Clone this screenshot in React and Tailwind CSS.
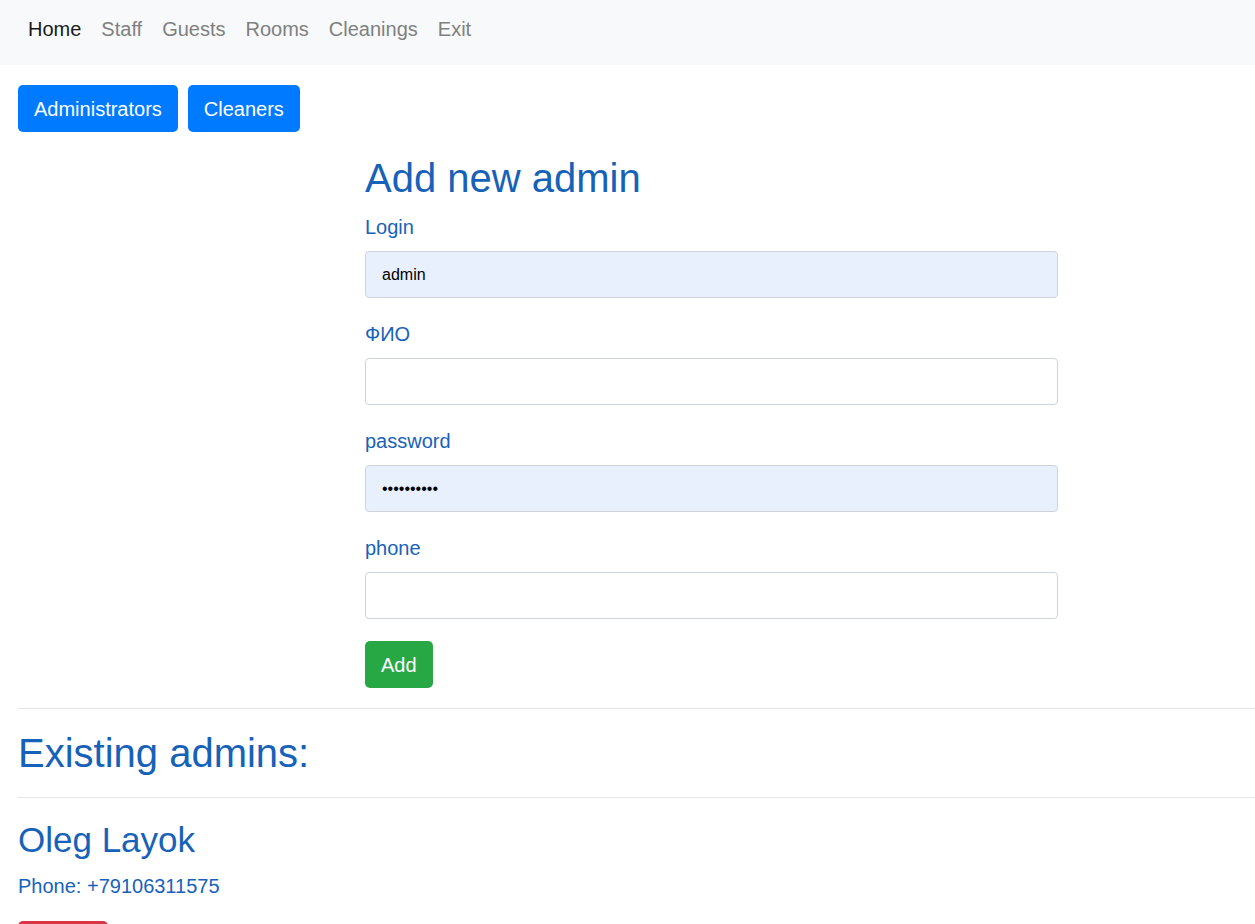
import React from 'react';

const navLinks = ['Home', 'Staff', 'Guests', 'Rooms', 'Cleanings', 'Exit'];

const fields = [
  { label: 'Login', type: 'text', value: 'admin', filled: true },
  { label: 'ФИО', type: 'text', value: '', filled: false },
  { label: 'password', type: 'password', value: 'qwerty1234', filled: true },
  { label: 'phone', type: 'text', value: '', filled: false },
];

const admins = [{ name: 'Oleg Layok', phone: '+79106311575' }];

export default function App() {
  return (
    <div className="min-h-screen bg-white font-['Liberation_Sans',Arial,sans-serif]">
      <nav className="h-[65px] bg-[#f8f9fa] flex items-start pt-[14px] pl-[18px]">
        {navLinks.map((link, i) => (
          <a
            key={link}
            href="#"
            className={`px-[10px] text-[20px] leading-[30px] ${
              i === 0 ? 'text-[#1a1a1a]' : 'text-[#808080]'
            }`}
          >
            {link}
          </a>
        ))}
      </nav>

      <div className="pl-[18px]">
        <div className="flex gap-[10px] mt-[20px]">
          <button className="h-[47px] px-[16px] rounded-[5px] bg-[#007bff] text-white text-[20px]">
            Administrators
          </button>
          <button className="h-[47px] px-[16px] rounded-[5px] bg-[#007bff] text-white text-[20px]">
            Cleaners
          </button>
        </div>

        <form className="ml-[347px] w-[693px] mt-[22px]" onSubmit={(e) => e.preventDefault()}>
          <h1 className="text-[40px] leading-[48px] text-[#1762b9] mb-[10px]">Add new admin</h1>
          {fields.map((f) => (
            <div key={f.label} className="mb-[21px]">
              <label className="block text-[20px] leading-[30px] text-[#1762b9] mb-[9px]">{f.label}</label>
              <input
                type={f.type}
                defaultValue={f.value}
                className={`block w-full h-[47px] px-[16px] text-[16px] text-black border border-[#ced4da] rounded-[4px] outline-none ${
                  f.filled ? 'bg-[#e8f0fe]' : 'bg-white'
                }`}
              />
            </div>
          ))}
          <button className="mt-[1px] h-[47px] px-[16px] rounded-[5px] bg-[#28a745] text-white text-[20px]">
            Add
          </button>
        </form>

        <hr className="mt-[20px] border-0 border-t border-[#e6e6e6]" />
        <h1 className="mt-[20px] text-[40px] leading-[48px] text-[#1762b9]">Existing admins:</h1>
        <hr className="mt-[20px] border-0 border-t border-[#e6e6e6]" />

        {admins.map((a) => (
          <div key={a.name} className="mt-[21px]">
            <h2 className="text-[35px] leading-[42px] text-[#1762b9] mb-[10px]">{a.name}</h2>
            <p className="text-[20px] leading-[30px] text-[#1762b9]">Phone: {a.phone}</p>
            <button className="mt-[20px] h-[47px] px-[16px] rounded-[5px] bg-[#dc3545] text-white text-[20px]">
              Delete
            </button>
          </div>
        ))}
      </div>
    </div>
  );
}
